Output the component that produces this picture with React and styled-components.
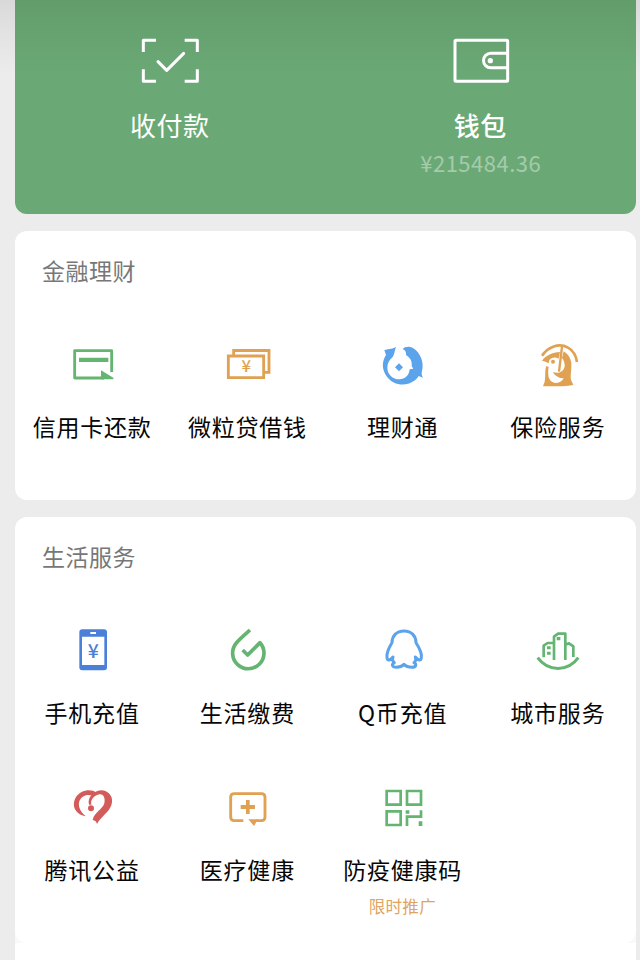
import React from 'react';
import styled, { createGlobalStyle } from 'styled-components';

const GlobalStyle = createGlobalStyle`
    body {
        margin: 0;
        background: #ececec;
        font-family: "Noto Sans CJK SC", "Noto Sans", sans-serif;
    }
`
const Page = styled.div`
    box-sizing: border-box;
    width: 640px;
    height: 960px;
    overflow: hidden;
    padding: 0 4px 0 15px;
    background: linear-gradient(#d9d9d9 0, #e3e3e3 35px, #ececec 75px);
`
const Header = styled.header`
    display: flex;
    height: 214px;
    margin-bottom: 17px;
    border-radius: 0 0 12px 12px;
    background: linear-gradient(#629c6b 0, #67a371 35px, #6aa975 80px);
`
const HeaderItem = styled.div`
    flex: 1;
    display: flex;
    flex-direction: column;
    align-items: center;
    padding-top: 31px;
    color: #fff;

    svg {
        display: block;
        width: 60px;
        height: 60px;
    }
`
const HeaderLabel = styled.div`
    margin-top: 15px;
    padding-right: 1px;
    font-size: 26px;
    line-height: 38px;
    letter-spacing: 0.5px;
    font-weight: ${({ bold }) => (bold ? 500 : 400)};
`
const Amount = styled.div`
    margin-top: 3px;
    font-size: 22px;
    line-height: 30px;
    letter-spacing: 0.5px;
    color: #a5cbab;
`
const Card = styled.section`
    box-sizing: border-box;
    height: ${({ height }) => height}px;
    margin-bottom: ${({ gap }) => gap}px;
    border-radius: 12px;
    background: #fff;
`
const LastCards = styled.div`
    height: 443px;
    background: linear-gradient(transparent 413px, #f9f9f9 413px, #f9f9f9 426px, #fff 426px);
`
const Title = styled.h2`
    margin: 0;
    padding: 21px 27px 0;
    font-size: 23px;
    line-height: 36px;
    font-weight: 400;
    letter-spacing: 0.5px;
    color: #777;
`
const Grid = styled.div`
    display: grid;
    grid-template-columns: repeat(4, 1fr);
    grid-auto-rows: 157px;
    padding-top: 53px;
`
const Item = styled.div`
    display: flex;
    flex-direction: column;
    align-items: center;

    svg {
        display: block;
        width: 48px;
        height: 48px;
    }
`
const Label = styled.div`
    margin-top: 19px;
    padding-right: 1px;
    font-size: 23px;
    line-height: 36px;
    letter-spacing: 0.8px;
    white-space: nowrap;
    color: #060606;
`
const Promo = styled.div`
    margin-top: 7px;
    padding-right: 1.5px;
    font-size: 16.5px;
    line-height: 24px;
    letter-spacing: 0.3px;
    color: #e0a462;
`

const GREEN = '#64b472'
const ORANGE = '#e0a153'
const BLUE = '#5ba3ea'
const PHONE_BLUE = '#4a80d9'
const RED = '#d35c5b'

const Icon = ({ children }) => <svg viewBox="0 0 144 144" fill="none">{children}</svg>

const Yen = ({ x, y, size, color }) => (
    <text
        x={x}
        y={y}
        fontSize={size}
        fill={color}
        fontWeight="500"
        textAnchor="middle"
        fontFamily="Noto Sans CJK SC, sans-serif">
        ¥
    </text>
)

const ScanIcon = () => (
    <svg viewBox="0 0 180 180" fill="none" stroke="#fff" strokeWidth="9" strokeLinecap="round" strokeLinejoin="round">
        <path strokeLinecap="butt" d="M10 63V28H48M134 28H172V63M172 115V151H134M48 151H10V115" />
        <path d="M54 92L80 118L131 67" />
    </svg>
)

const WalletIcon = () => (
    <svg viewBox="0 0 180 180" fill="none" stroke="#fff" strokeWidth="9" strokeLinejoin="round">
        <rect x="12" y="28" width="158" height="123" rx="3" />
        <path d="M170 67H119A21 21 0 0 0 119 110H170" />
        <circle cx="118" cy="89" r="8" fill="#fff" stroke="none" />
    </svg>
)

const CreditIcon = () => (
    <Icon>
        <path d="M128 93V29H17V111H105" stroke={GREEN} strokeWidth="8.500" strokeLinejoin="round" />
        <path d="M30 50H118V63H30zM96 88L134 111L132 115H96z" fill={GREEN} />
    </Icon>
)

const CashIcon = () => (
    <Icon>
        <path d="M29 42V28.500H135V94H121M13 45H119V110H13z" stroke={ORANGE} strokeWidth="8.500" />
        <Yen x={66.5} y={94} size={50} color={ORANGE} />
    </Icon>
)

const FundIcon = () => (
    <Icon>
        <path
            fill={BLUE}
            d="M51 17C43 24 30 23 16 27L21 42C8 62 8 86 24 107C42 132 80 139 108 118C114 113 117 108 119 105L132 110C128 103 127 98 129 90C136 64 124 36 105 23C93 14 78 16 71 24C79 27 82 34 81 42C94 50 100 61 98 75L103 83L92 85C90 104 78 115 61 115C41 115 25 100 25 80C25 67 31 56 41 48C46 41 47 29 51 17z"
        />
        <path fill={BLUE} d="M60 67L72 79L60 91L48 79z" />
    </Icon>
)

const InsuranceIcon = () => (
    <Icon>
        <path d="M24 44C42 17 75 5 102 20C116 28 126 43 129 63" stroke={ORANGE} strokeWidth="8" />
        <path
            fill={ORANGE}
            d="M24 59C36 43 55 34 78 33L74 53C65 48 52 48 46 58L44 67C38 63 31 61 24 59z"
        />
        <path
            fill={ORANGE}
            d="M89 31C106 42 114 57 112 79C111 98 108 113 113 121L118 132C90 137 61 136 27 136L32 122C35 110 32 93 36 76L44 77C41 97 42 115 54 122C68 130 84 124 89 112C78 113 66 107 56 94C66 96 76 97 83 91C95 83 95 65 84 51z"
        />
        <circle cx="57" cy="62" r="6" fill={ORANGE} />
        <path d="M84 18L75 92" stroke={ORANGE} strokeWidth="7" />
    </Icon>
)

const PhoneIcon = () => (
    <Icon>
        <rect x="31" y="7" width="83" height="123" rx="9" fill={PHONE_BLUE} />
        <path d="M39 29H106V114H39zM64 15H81V21H64z" fill="#fff" />
        <Yen x={72.5} y={93} size={58} color={PHONE_BLUE} />
    </Icon>
)

const BillIcon = () => (
    <Icon>
        <path
            d="M78 9C61 24 47 36 37 48A47 47 0 1 0 108 47L71 84L56 69"
            stroke={GREEN}
            strokeWidth="11"
            strokeLinejoin="round"
        />
    </Icon>
)

const QQIcon = () => (
    <Icon>
        <path
            d="M75 12C52 12 39 27 39 47C33 59 22 72 24 91C25 103 33 101 42 90C39 97 41 103 46 107C37 112 39 121 52 121C63 121 70 118 75 112C80 118 87 121 99 121C111 121 114 112 105 107C110 103 112 97 109 90C118 101 126 103 127 91C129 72 117 59 111 47C111 27 98 12 75 12z"
            stroke={BLUE}
            strokeWidth="9"
            strokeLinejoin="round"
        />
    </Icon>
)

const CityIcon = () => (
    <Icon>
        <path d="M11 92C42 135 102 135 133 92" stroke={GREEN} strokeWidth="9" />
        <path
            d="M29 91V56L41 48H60V99M60 48V29L72 20H94V99M94 53L105 49L118 58V90"
            stroke={GREEN}
            strokeWidth="8"
            strokeLinejoin="round"
        />
        <path d="M68 30H79V40H68zM39 58H50V67H39zM39 74H50V83H39z" fill={GREEN} />
    </Icon>
)

const HeartIcon = () => (
    <Icon>
        <path
            fill={RED}
            d="M84 26C62 11 34 20 21 39C7 62 16 91 51 97C35 85 26 68 31 52C37 35 57 28 72 37z"
        />
        <path
            fill={RED}
            d="M60 62C54 42 74 19 99 19C123 21 135 43 127 64C119 86 98 96 84 120C82 112 77 109 71 108C75 86 101 76 106 58C110 41 102 29 92 31C76 33 64 46 67 62z"
        />
        <circle cx="66" cy="73" r="9" fill={RED} />
    </Icon>
)

const MedicalIcon = () => (
    <Icon>
        <path
            d="M58 110H31Q20 110 20 99V40Q20 29 31 29H112Q123 29 123 40V99Q123 110 112 110H97"
            stroke={ORANGE}
            strokeWidth="8.500"
        />
        <path d="M66 48H77V63H93V75H77V90H66V75H50V63H66zM73 106H102L90 126z" fill={ORANGE} />
    </Icon>
)

const QrIcon = () => (
    <Icon>
        <path
            d="M23 21H65V62H23zM84 21H126V62H84zM23 82H65V123H23zM126 79V98H84V126"
            stroke={GREEN}
            strokeWidth="8"
        />
        <path d="M80 79H91V89H80zM119 112H130V126H119z" fill={GREEN} />
    </Icon>
)

const finance = [
    { name: '信用卡还款', icon: CreditIcon },
    { name: '微粒贷借钱', icon: CashIcon },
    { name: '理财通', icon: FundIcon },
    { name: '保险服务', icon: InsuranceIcon },
]

const life = [
    { name: '手机充值', icon: PhoneIcon },
    { name: '生活缴费', icon: BillIcon },
    { name: 'Q币充值', icon: QQIcon },
    { name: '城市服务', icon: CityIcon },
    { name: '腾讯公益', icon: HeartIcon },
    { name: '医疗健康', icon: MedicalIcon },
    { name: '防疫健康码', icon: QrIcon, promo: '限时推广' },
]

const Services = ({ title, items, height, gap }) => (
    <Card height={height} gap={gap}>
        <Title>{title}</Title>
        <Grid>
            {items.map(({ name, icon: ItemIcon, promo }) => (
                <Item key={name}>
                    <ItemIcon />
                    <Label>{name}</Label>
                    {promo && <Promo>{promo}</Promo>}
                </Item>
            ))}
        </Grid>
    </Card>
)

const App = () => {
    return (
        <>
            <GlobalStyle />
            <Page>
                <Header>
                    <HeaderItem>
                        <ScanIcon />
                        <HeaderLabel>收付款</HeaderLabel>
                    </HeaderItem>
                    <HeaderItem>
                        <WalletIcon />
                        <HeaderLabel bold>钱包</HeaderLabel>
                        <Amount>¥215484.36</Amount>
                    </HeaderItem>
                </Header>
                <Services title="金融理财" items={finance} height={269} gap={17} />
                <LastCards>
                    <Services title="生活服务" items={life} height={426} gap={0} />
                </LastCards>
            </Page>
        </>
    )
}

export default App;
